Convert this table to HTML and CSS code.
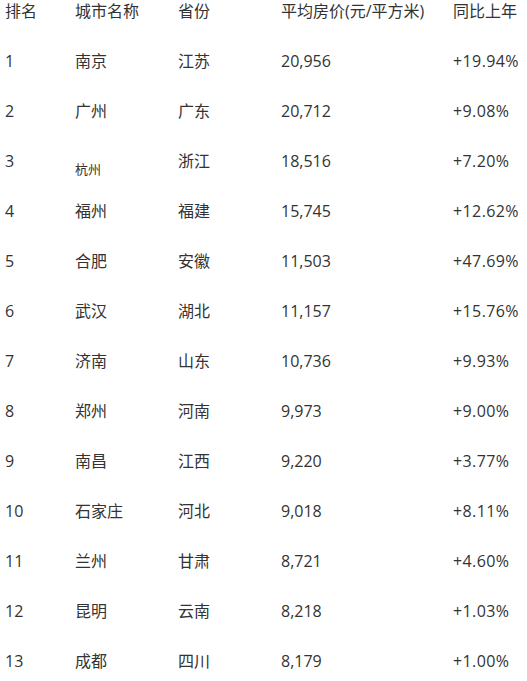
FILE: index.html
```html
<!DOCTYPE html>
<html lang="zh">
<head>
<meta charset="utf-8">
<link rel="stylesheet" href="styles.css">
</head>
<body>
<div class="table">
  <div class="row head"><span>排名</span><span>城市名称</span><span>省份</span><span>平均房价(元/平方米)</span><span>同比上年</span></div>
  <div class="row"><span>1</span><span>南京</span><span>江苏</span><span>20,956</span><span class="pct">+19.94%</span></div>
  <div class="row"><span>2</span><span>广州</span><span>广东</span><span>20,712</span><span class="pct">+9.08%</span></div>
  <div class="row"><span>3</span><span class="small">杭州</span><span>浙江</span><span>18,516</span><span class="pct">+7.20%</span></div>
  <div class="row"><span>4</span><span>福州</span><span>福建</span><span>15,745</span><span class="pct">+12.62%</span></div>
  <div class="row"><span>5</span><span>合肥</span><span>安徽</span><span>11,503</span><span class="pct">+47.69%</span></div>
  <div class="row"><span>6</span><span>武汉</span><span>湖北</span><span>11,157</span><span class="pct">+15.76%</span></div>
  <div class="row"><span>7</span><span>济南</span><span>山东</span><span>10,736</span><span class="pct">+9.93%</span></div>
  <div class="row"><span>8</span><span>郑州</span><span>河南</span><span>9,973</span><span class="pct">+9.00%</span></div>
  <div class="row"><span>9</span><span>南昌</span><span>江西</span><span>9,220</span><span class="pct">+3.77%</span></div>
  <div class="row"><span>10</span><span>石家庄</span><span>河北</span><span>9,018</span><span class="pct">+8.11%</span></div>
  <div class="row"><span>11</span><span>兰州</span><span>甘肃</span><span>8,721</span><span class="pct">+4.60%</span></div>
  <div class="row"><span>12</span><span>昆明</span><span>云南</span><span>8,218</span><span class="pct">+1.03%</span></div>
  <div class="row"><span>13</span><span>成都</span><span>四川</span><span>8,179</span><span class="pct">+1.00%</span></div>
</div>
</body>
</html>
```
FILE: styles.css
```css
html, body {
  margin: 0;
  padding: 0;
  background: #ffffff;
}
body {
  font-family: "Open Sans", "Noto Sans CJK SC", sans-serif;
  font-size: 16px;
  color: #333333;
}
.table {
  display: flex;
  flex-direction: column;
  padding-left: 5px;
}
.row {
  display: grid;
  grid-template-columns: 70px 103px 103px 172px 1fr;
  height: 50px;
  line-height: 22px;
  align-items: start;
}
.row span {
  white-space: nowrap;
}
.row .pct {
  letter-spacing: 0.4px;
}
.row .small {
  font-size: 13px;
  padding-top: 8px;
}
```
